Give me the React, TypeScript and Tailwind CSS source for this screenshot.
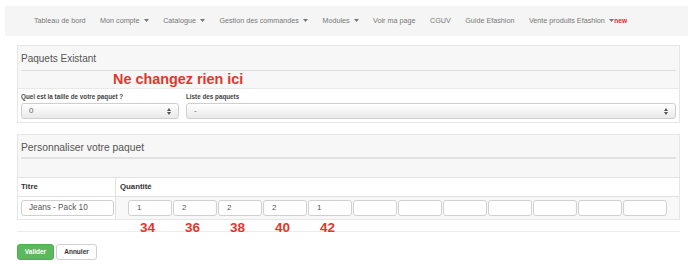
const Caret = () => (
  <svg width="5" height="3" viewBox="0 0 5 3" className="ml-[4px] inline-block">
    <path d="M0 0 L5 0 L2.5 3 Z" fill="#777" />
  </svg>
);

const navItems: { label: string; caret?: boolean }[] = [
  { label: "Tableau de bord" },
  { label: "Mon compte", caret: true },
  { label: "Catalogue", caret: true },
  { label: "Gestion des commandes", caret: true },
  { label: "Modules", caret: true },
  { label: "Voir ma page" },
  { label: "CGUV" },
  { label: "Guide Efashion" },
];

function FakeSelect({ value, className }: { value: string; className: string }) {
  return (
    <div
      className={`h-[16px] flex items-center justify-between px-[7px] rounded-[3px] border border-[#cfcfcf] bg-gradient-to-b from-white to-[#e9e9e9] text-[8px] text-[#666] ${className}`}
    >
      <span>{value}</span>
      <svg width="4" height="7" viewBox="0 0 4 7">
        <path d="M0 3 L4 3 L2 0 Z M0 4 L4 4 L2 7 Z" fill="#555" />
      </svg>
    </div>
  );
}

const quantities = ["1", "2", "2", "2", "1", "", "", "", "", "", "", ""];
const sizes = ["34", "36", "38", "40", "42"];

export default function App() {
  return (
    <div className="w-[688px] h-[266px] bg-white overflow-hidden font-['Liberation_Sans',Arial,sans-serif]">
      <div className="pt-[6px] pl-[5px]">
        <nav className="h-[30px] bg-[#f5f5f5] flex items-center pl-[29px] gap-[14.5px] text-[7.2px] text-[#777]">
          {navItems.map(item => (
            <span key={item.label} className="flex items-center whitespace-nowrap">
              {item.label}
              {item.caret && <Caret />}
            </span>
          ))}
          <span className="flex items-center whitespace-nowrap">
            Vente produits Efashion
            <Caret />
            <span className="text-[#e0261f] font-bold text-[6.5px] ml-[0.5px]">new</span>
          </span>
        </nav>
      </div>

      {/* Paquets existant */}
      <div className="ml-[17px] w-[663px] mt-[9px] border border-[#e6e6e6]">
        <div className="bg-[#f7f7f7] px-[3px]">
          <div className="h-[25px] flex items-end pb-[6px] border-b border-[#dedede] text-[10px] leading-none text-[#555]">
            Paquets Existant
          </div>
          <div className="h-[17px] flex items-center pl-[92px] text-[14.4px] font-bold text-[#e2362c] leading-none">
            Ne changez rien ici
          </div>
        </div>
        <div className="border-t border-[#e8e8e8] px-[3px] pt-[3px] pb-[3px] flex gap-[7px]">
          <div className="w-[158px]">
            <div className="text-[6.3px] font-bold text-[#444] h-[10px] leading-[10px]">
              Quel est la taille de votre paquet ?
            </div>
            <FakeSelect value="0" className="mt-[1px]" />
          </div>
          <div className="flex-1">
            <div className="text-[6.3px] font-bold text-[#444] h-[10px] leading-[10px]">Liste des paquets</div>
            <FakeSelect value="-" className="mt-[1px]" />
          </div>
        </div>
      </div>

      {/* Personnaliser */}
      <div className="ml-[17px] w-[663px] mt-[11px] border border-[#e6e6e6]">
        <div className="bg-[#f7f7f7] px-[3px]">
          <div className="h-[24px] flex items-end pb-[4px] border-b-2 border-[#e2e2e2] text-[10.3px] leading-none text-[#555]">
            Personnaliser votre paquet
          </div>
          <div className="h-[18px]" />
        </div>
        <div className="flex border-t border-[#e2e2e2]">
          <div className="w-[98px] border-r border-[#e2e2e2]">
            <div className="h-[18px] flex items-center pl-[3px] text-[7.8px] font-bold text-[#333]">Titre</div>
            <div className="h-[23px] border-t border-[#e2e2e2] flex items-center pl-[3px]">
              <div className="w-[93px] h-[16px] border border-[#d0d0d0] rounded-[3px] bg-white flex items-center pl-[7px] text-[8.2px] text-[#555]">
                Jeans - Pack 10
              </div>
            </div>
          </div>
          <div className="flex-1">
            <div className="h-[18px] flex items-center pl-[4px] text-[7.8px] font-bold text-[#333]">Quantité</div>
            <div className="h-[23px] border-t border-[#e2e2e2] bg-[#f8f8f8] flex items-center pl-[12px] gap-[1px]">
              {quantities.map((q, i) => (
                <div
                  key={i}
                  className="w-[44px] h-[16px] border border-[#d0d0d0] rounded-[3px] bg-white flex items-center pl-[8px] text-[8px] text-[#555]"
                >
                  {q}
                </div>
              ))}
            </div>
          </div>
        </div>
      </div>

      <div className="ml-[17px] w-[663px] h-[12px] border-b border-[#ececec] flex pl-[123px] gap-[31px]">
        {sizes.map(s => (
          <span key={s} className="w-[14px] text-[13.5px] font-bold text-[#e2362c] leading-[12px] mt-[2px]">
            {s}
          </span>
        ))}
      </div>

      <div className="ml-[17px] mt-[12px] flex gap-[2px]">
        <button className="w-[37px] h-[16px] rounded-[3px] bg-[#5cb85c] border border-[#4cae4c] text-white text-[6.5px] font-bold">
          Valider
        </button>
        <button className="w-[41px] h-[16px] rounded-[3px] bg-white border border-[#d0d0d0] text-[#333] text-[6.5px] font-bold">
          Annuler
        </button>
      </div>
    </div>
  );
}
